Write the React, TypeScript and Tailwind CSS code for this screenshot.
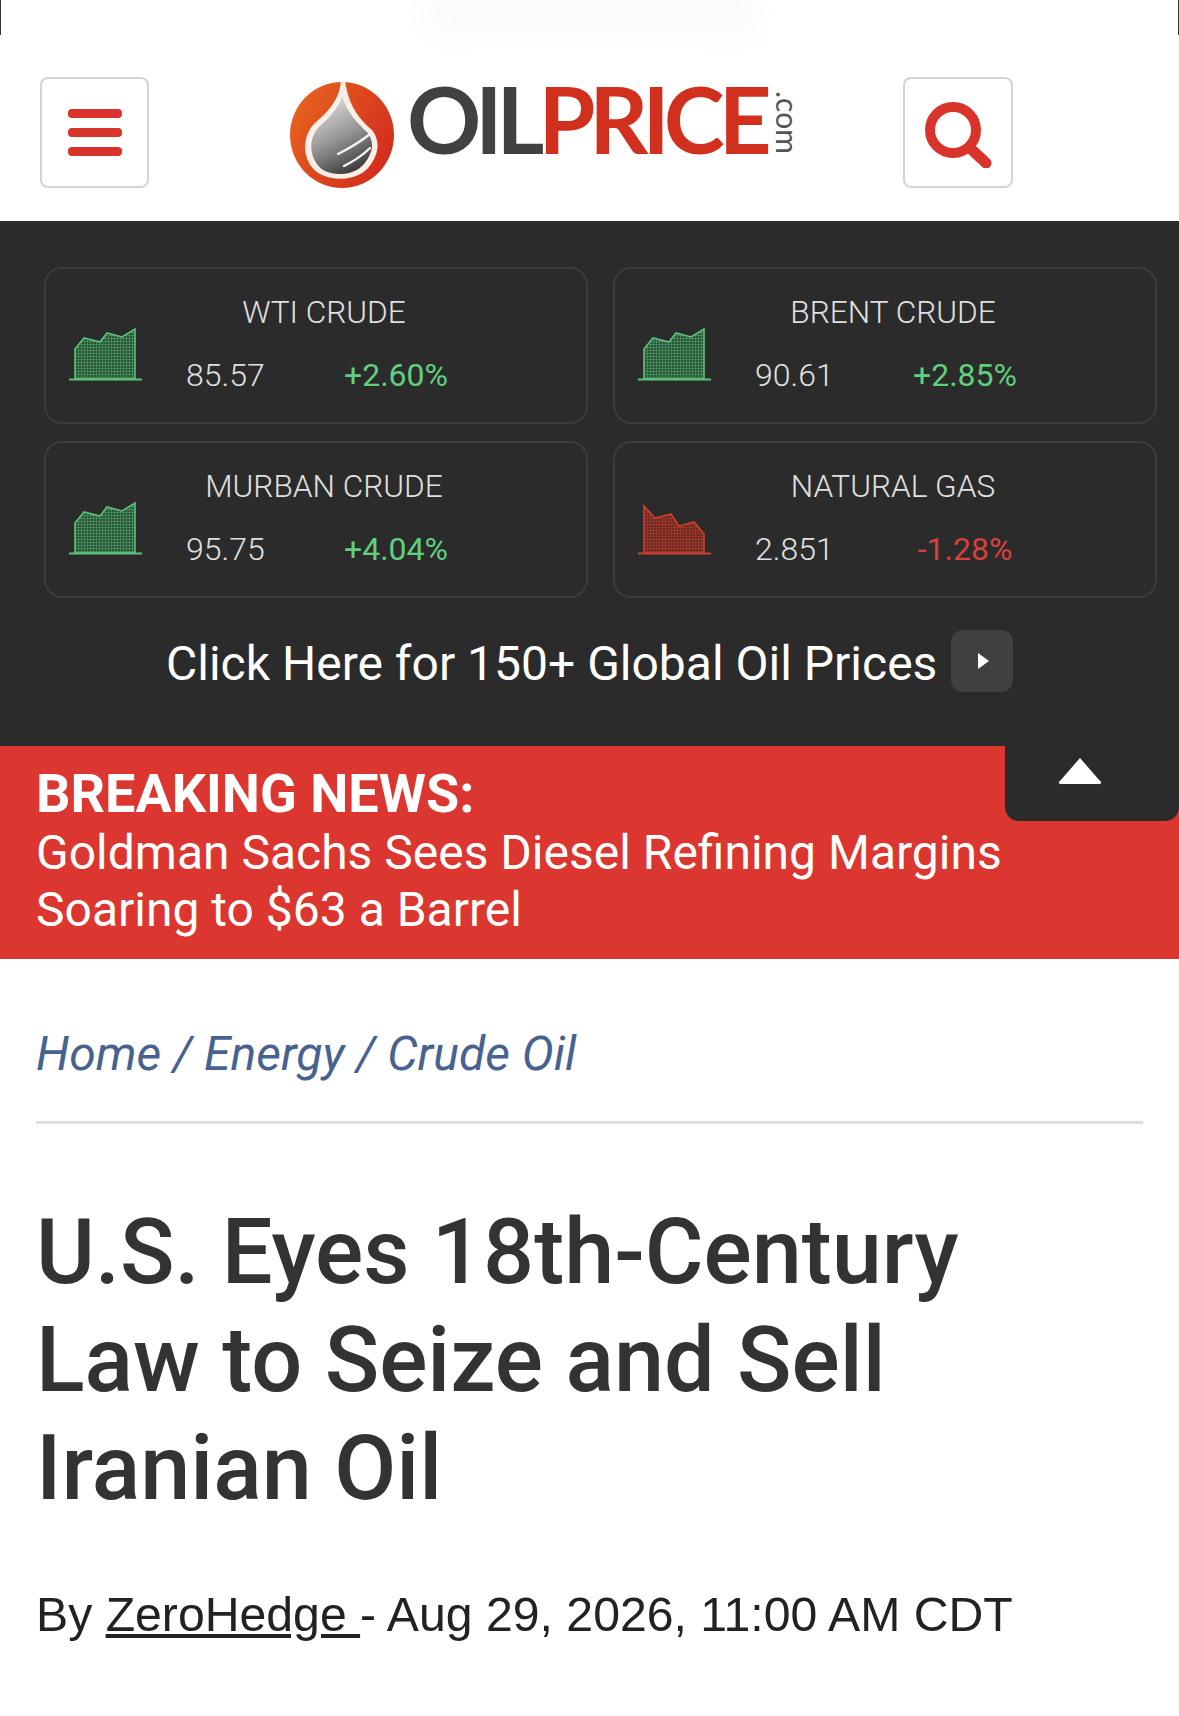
import React from "react";

const roboto = "font-['Roboto',sans-serif]";

const quotes = [
  { name: "WTI CRUDE", value: "85.57", change: "+2.60%", up: true },
  { name: "BRENT CRUDE", value: "90.61", change: "+2.85%", up: true },
  { name: "MURBAN CRUDE", value: "95.75", change: "+4.04%", up: true },
  { name: "NATURAL GAS", value: "2.851", change: "-1.28%", up: false },
];

// little hatched area chart used on every quote card
const MiniChart = ({ up }: { up: boolean }) => {
  const color = up ? "#5cc27c" : "#c8402f";
  const id = up ? "hatch-up" : "hatch-down";
  const area = up
    ? "M6 47 V17 L15 6 L31 10 L38 1 L53 5 L66 -3 V47 Z"
    : "M6 47 V0 L17 12 L33 8 L41 20 L56 16 L66 28 V47 Z";
  return (
    <svg width="73" height="53" viewBox="0 -4 73 53" className="-mt-[1px] shrink-0">
      <defs>
        <pattern id={id} width="3" height="3" patternUnits="userSpaceOnUse">
          <rect width="3" height="3" fill={up ? "#2c5238" : "#6b2a22"} />
          <path d="M0 0H3M0 0V3" stroke={color} strokeWidth="1" opacity="0.85" />
        </pattern>
      </defs>
      <path d={area} fill={`url(#${id})`} stroke={color} strokeWidth="1.6" />
      <path d="M0 47.5H73" stroke={color} strokeWidth="1.8" />
    </svg>
  );
};

const QuoteCard = ({ name, value, change, up }: (typeof quotes)[number]) => (
  <div className="flex h-[157px] rounded-[18px] border-2 border-[#3c3c3c] pl-[23px] pr-[100px]">
    <div className="mt-[60px] w-[93px] shrink-0">
      <MiniChart up={up} />
    </div>
    <div className="flex-1 pt-[24px]">
      <div className="text-center text-[31.6px] font-light leading-[40px] text-[#e0e0e0]">{name}</div>
      <div className="mt-[22px] flex pl-[24px] text-[32px] font-light leading-[40px]">
        <span className="w-[145px] text-[#e0e0e0]">{value}</span>
        <span className={`w-[130px] text-center font-normal ${up ? "text-[#5fd07f]" : "text-[#d8403c]"}`}>{change}</span>
      </div>
    </div>
  </div>
);

const Logo = () => (
  <div className="flex items-start">
    <svg width="106" height="108" viewBox="0 0 106 108" className="shrink-0">
      <defs>
        <linearGradient id="ring" x1="0" y1="0" x2="1" y2="0.6">
          <stop offset="0" stopColor="#e8691f" />
          <stop offset="1" stopColor="#d42e1e" />
        </linearGradient>
        <linearGradient id="drop" x1="0.2" y1="0" x2="0.6" y2="1">
          <stop offset="0" stopColor="#e4e4e4" />
          <stop offset="0.55" stopColor="#959595" />
          <stop offset="1" stopColor="#3d3d3d" />
        </linearGradient>
      </defs>
      <ellipse cx="52" cy="55" rx="52" ry="53" fill="url(#ring)" />
      <path d="M51 0 C50 18 40 30 26 42 C10 56 12 84 30 94 C44 102 68 100 78 88 C90 74 90 60 82 50 C68 38 58 24 55 0 Z" fill="#fbeee6" />
      <path d="M52 16 C48 30 38 38 30 46 C17 58 19 80 33 90 C45 97 65 95 74 84 C84 72 84 62 78 53 C66 42 57 32 52 16 Z" fill="url(#drop)" />
      <path d="M48 74 C58 69 70 62 80 54 M54 86 C64 81 73 75 80 68" stroke="#f2f2f2" strokeWidth="2.4" fill="none" strokeLinecap="round" />
    </svg>
    <div className="ml-[11px] mt-[-6px] flex font-['Lato',sans-serif] text-[92px] font-bold leading-[90px] tracking-[-6px]">
      <span className="text-[#414042]">OIL</span>
      <span className="text-[#d2301f]">PRICE</span>
    </div>
    <span className="ml-[9px] mt-[11px] font-['Lato',sans-serif] text-[30px] leading-[26px] text-[#555] [writing-mode:vertical-rl]">.com</span>
  </div>
);

export default function App() {
  return (
    <div className={`relative min-h-[1716px] overflow-hidden bg-white ${roboto}`}>
      {/* screenshot artefacts at the very top */}
      <div className="absolute left-0 top-0 h-[35px] w-px bg-[#333]" />
      <div className="absolute right-0 top-0 h-[35px] w-px bg-[#333]" />
      <div className="absolute left-[420px] top-[-20px] h-[60px] w-[340px] rounded-full bg-[#fbfbfb] blur-md" />

      {/* header */}
      <header className="relative flex h-[221px] pl-[40px] pt-[77px]">
        <button className="flex h-[111px] w-[109px] flex-col items-center justify-center gap-[10px] rounded-[8px] border-2 border-[#d4d4d4] bg-white">
          <span className="h-[9px] w-[54px] rounded-[4px] bg-[#d9342b]" />
          <span className="h-[9px] w-[54px] rounded-[4px] bg-[#d9342b]" />
          <span className="h-[9px] w-[54px] rounded-[4px] bg-[#d9342b]" />
        </button>
        <div className="ml-[141px] mt-[3px] w-[613px]">
          <Logo />
        </div>
        <button className="flex h-[111px] w-[110px] items-center justify-center rounded-[8px] border-2 border-[#d4d4d4] bg-white">
          <svg width="68" height="66" viewBox="0 0 68 66" className="mt-[4px]">
            <circle cx="29" cy="28" r="23" fill="none" stroke="#d9342b" strokeWidth="10" />
            <path d="M46 46 L62 61" stroke="#d9342b" strokeWidth="11" strokeLinecap="round" />
          </svg>
        </button>
      </header>

      {/* oil prices panel */}
      <section className="h-[525px] bg-[#2b2b2b] pl-[44px] pr-[22px] pt-[46px]">
        <div className="grid grid-cols-2 gap-x-[25px] gap-y-[17px]">
          {quotes.map((q) => (
            <QuoteCard key={q.name} {...q} />
          ))}
        </div>
        <div className="mt-[29px] flex items-center pl-[122px]">
          <span className="mt-[6px] text-[48px] leading-[62px] text-white">Click Here for 150+ Global Oil Prices</span>
          <span className="ml-[14px] flex h-[62px] w-[62px] items-center justify-center rounded-[12px] bg-[#404040]">
            <span className="ml-[2px] h-0 w-0 border-y-[8px] border-l-[11px] border-y-transparent border-l-white" />
          </span>
        </div>
      </section>

      {/* breaking news */}
      <section className="relative h-[213px] bg-[#db3730] pl-[36px] pt-[18px] text-white">
        <div className="text-[54px] font-bold leading-[60px]">BREAKING NEWS:</div>
        <div className="w-[1000px] text-[48px] leading-[57px]">
          Goldman Sachs Sees Diesel Refining Margins
          <br />
          Soaring to $63 a Barrel
        </div>
        <div className="absolute right-0 top-0 flex h-[75px] w-[174px] justify-center rounded-b-[14px] bg-[#2b2b2b] pr-[24px] pt-[11px]">
          <svg width="44" height="28" viewBox="0 0 44 28">
            <path d="M22 1 L42 24 a1.5 1.5 0 0 1 -1 3 H3 a1.5 1.5 0 0 1 -1 -3 Z" fill="#fff" />
          </svg>
        </div>
      </section>

      {/* article head */}
      <main className="px-[36px]">
        <div className="border-b-[3px] border-[#dedede] pb-[39px] pt-[67px] text-[48px] italic leading-[56px] text-[#48628f]">
          Home / Energy / Crude Oil
        </div>
        <h1 className="mt-[75px] w-[1050px] text-[90px] font-medium leading-[108px] text-[#333]">
          U.S. Eyes 18th-Century
          <br />
          Law to Seize and Sell
          <br />
          Iranian Oil
        </h1>
        <p className="mt-[63px] font-['Liberation_Sans',sans-serif] text-[48.2px] leading-[56px] text-[#222]">
          By <span className="underline">ZeroHedge </span>- Aug 29, 2026, 11:00 AM CDT
        </p>
      </main>
    </div>
  );
}
